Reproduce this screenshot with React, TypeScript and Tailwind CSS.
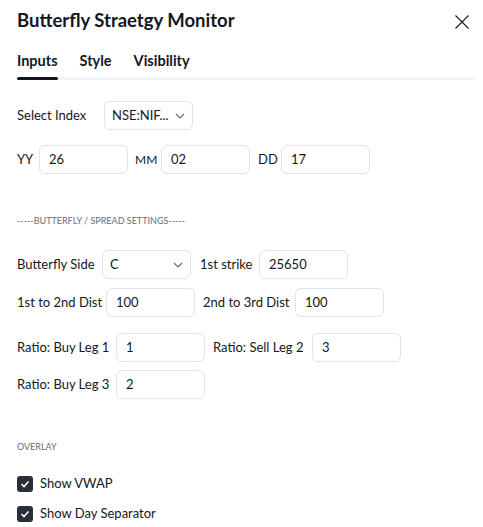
import React from "react";

const font = { fontFamily: 'Lato, "Open Sans", sans-serif' };

function Chevron() {
  return (
    <svg width="10" height="6" viewBox="0 0 10 6" fill="none" className="shrink-0">
      <path d="M1 1l4 4 4-4" stroke="#6a6d78" strokeWidth="1.2" />
    </svg>
  );
}

function Input({ value, w = "w-[89px]" }: { value: string; w?: string }) {
  return (
    <div className={`${w} h-[29px] border border-[#e0e3eb] rounded-[6px] flex items-center px-[9px] text-[13px] text-[#131722]`}>
      {value}
    </div>
  );
}

function Select({ value }: { value: string }) {
  return (
    <div className="w-[89px] h-[29px] border border-[#e0e3eb] rounded-[6px] flex items-center justify-between pl-[7px] pr-[7px] text-[13px] text-[#131722]">
      <span>{value}</span>
      <Chevron />
    </div>
  );
}

function Check({ label }: { label: string }) {
  return (
    <div className="flex items-center gap-[7px] h-[30px]">
      <div className="w-[16px] h-[16px] rounded-[3px] bg-[#2a2e39] flex items-center justify-center">
        <svg width="10" height="8" viewBox="0 0 10 8" fill="none">
          <path d="M1.5 4l2.5 2.5 4.5-5" stroke="white" strokeWidth="1.6" />
        </svg>
      </div>
      <span className="text-[13px] text-[#131722]">{label}</span>
    </div>
  );
}

export default function App() {
  return (
    <div style={font} className="w-[483px] h-[527px] bg-white overflow-hidden text-[#131722]">
      <div className="flex items-center justify-between pl-[17px] pr-[12px] pt-[3px] h-[38px]">
        <div className="text-[18.5px] font-bold">Butterfly Straetgy Monitor</div>
        <svg width="16" height="16" viewBox="0 0 16 16" className="mr-[1px] mt-[2px]">
          <path d="M1.5 1.5l13 13M14.5 1.5l-13 13" stroke="#131722" strokeWidth="1.1" />
        </svg>
      </div>
      <div className="px-[17px] mt-[11px]">
        <div className="flex gap-[22px] text-[14.5px] font-bold h-[24px] items-center">
          <span>Inputs</span>
          <span>Style</span>
          <span>Visibility</span>
        </div>
        <div className="h-[3px] bg-[#f0f3fa] rounded-full mt-[4px] mr-[-9px]">
          <div className="w-[41px] h-[3px] bg-[#131722] rounded-full" />
        </div>
      </div>
      <div className="px-[17px] pt-[21px] text-[13px]">
        <div className="flex items-center h-[29px]">
          <span className="w-[87px]">Select Index</span>
          <Select value="NSE:NIF..." />
        </div>
        <div className="flex items-center h-[29px] mt-[15px]">
          <span className="w-[22px]">YY</span>
          <Input value="26" />
          <span className="ml-[7px] w-[26px] text-[12px]">MM</span>
          <Input value="02" />
          <span className="ml-[8px] w-[23px]">DD</span>
          <Input value="17" />
        </div>
        <div className="text-[9px] text-[#6a6d78] mt-[41px] h-[12px] leading-[12px]">-----BUTTERFLY / SPREAD SETTINGS-----</div>
        <div className="flex items-center h-[29px] mt-[23px]">
          <span className="w-[85px]">Butterfly Side</span>
          <Select value="C" />
          <span className="ml-[9px] w-[59px]">1st strike</span>
          <Input value="25650" />
        </div>
        <div className="flex items-center h-[29px] mt-[9px]">
          <span className="w-[89px]">1st to 2nd Dist</span>
          <Input value="100" />
          <span className="ml-[8px] w-[92px]">2nd to 3rd Dist</span>
          <Input value="100" />
        </div>
        <div className="flex items-center h-[29px] mt-[16px]">
          <span className="w-[99px]">Ratio: Buy Leg 1</span>
          <Input value="1" />
          <span className="ml-[8px] w-[99px]">Ratio: Sell Leg 2</span>
          <Input value="3" />
        </div>
        <div className="flex items-center h-[29px] mt-[8px]">
          <span className="w-[99px]">Ratio: Buy Leg 3</span>
          <Input value="2" />
        </div>
        <div className="text-[9px] text-[#6a6d78] mt-[42px] h-[12px] leading-[12px]">OVERLAY</div>
        <div className="mt-[16px]">
          <Check label="Show VWAP" />
          <Check label="Show Day Separator" />
        </div>
      </div>
    </div>
  );
}
